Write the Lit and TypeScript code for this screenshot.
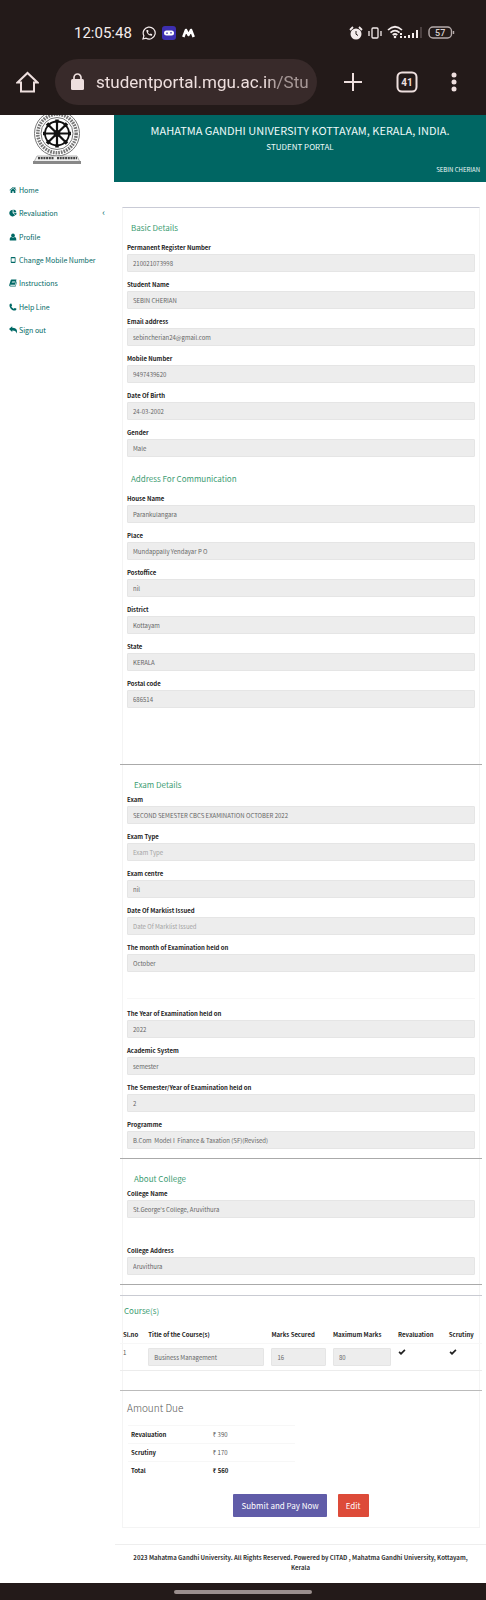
import { LitElement, html, css, svg, nothing } from "lit";
import { customElement, property } from "lit/decorators.js";

type Field = { label: string; value?: string; placeholder?: string };

const basic: Field[] = [
  { label: "Permanent Register Number", value: "210021073998" },
  { label: "Student Name", value: "SEBIN CHERIAN" },
  { label: "Email address", value: "sebincherian24@gmail.com" },
  { label: "Mobile Number", value: "9497439620" },
  { label: "Date Of Birth", value: "24-03-2002" },
  { label: "Gender", value: "Male" },
];
const address: Field[] = [
  { label: "House Name", value: "Parankulangara" },
  { label: "Place", value: "Mundappally Yendayar P O" },
  { label: "Postoffice", value: "nil" },
  { label: "District", value: "Kottayam" },
  { label: "State", value: "KERALA" },
  { label: "Postal code", value: "686514" },
];
const exam: Field[] = [
  { label: "Exam", value: "SECOND SEMESTER CBCS EXAMINATION OCTOBER 2022" },
  { label: "Exam Type", placeholder: "Exam Type" },
  { label: "Exam centre", value: "nil" },
  { label: "Date Of Marklist Issued", placeholder: "Date Of Marklist Issued" },
  { label: "The month of Examination held on", value: "October" },
];
const programme: Field[] = [
  { label: "The Year of Examination held on", value: "2022" },
  { label: "Academic System", value: "semester" },
  { label: "The Semester/Year of Examination held on", value: "2" },
  { label: "Programme", value: "B.Com  Model I  Finance & Taxation (SF)(Revised)" },
];
const college: Field[] = [
  { label: "College Name", value: "St.George's College, Aruvithura" },
  { label: "College Address", value: "Aruvithura" },
];

const glyphs = {
  home: svg`<path d="M1 8.2 8 2l2.6 2.3V2.6h2.2v3.7L15 8.2l-.9 1L8 3.9 1.900 9.200z"/><path d="M3.200 9.200 8 5l4.800 4.200V14H9.400v-3.600H6.600V14H3.200z"/>`,
  pie: svg`<path d="M7.300 1.500a6.700 6.700 0 1 0 5 11.200L7.300 8z"/><path d="M9 1v6l5.900-.6A6.500 6.500 0 0 0 9 1zM9.200 8.300l4.400 4A6.500 6.500 0 0 0 15 7.800z"/>`,
  user: svg`<circle cx="8" cy="4.800" r="3.700"/><path d="M1.500 15v-3c0-2.600 1.500-4 3.400-4a5 5 0 0 0 6.200 0c1.900 0 3.400 1.400 3.400 4v3z"/>`,
  mobile: svg`<path fill-rule="evenodd" d="M5 2h6.500A1.500 1.500 0 0 1 13 3.500v9a1.500 1.500 0 0 1-1.500 1.500H5a1.500 1.500 0 0 1-1.500-1.500v-9A1.500 1.500 0 0 1 5 2zM5 4.300v7.400h6.500V4.300z"/>`,
  book: svg`<path fill-rule="evenodd" d="M5 1h10l-2.800 10.500H2.600c-.7 1 0 1.800 1 1.800h9.200L15 4.500c.8.500.8 1 .6 1.800L13.400 15H3C1 15 0 13.300.6 11.600L3.400 2.400C3.700 1.500 4.200 1 5 1zm1.400 3-.3 1h6l.3-1zm-.7 2.500-.3 1h6l.3-1z"/>`,
  phone: svg`<path d="M1.200 3.200C2 1.600 3.300 1 4.600 1c.6 1 1.300 2.600 1.600 3.800-.3.800-1.500 1.200-1.500 2 .8 2 2.500 3.700 4.500 4.500.8 0 1.300-1.300 2-1.500 1.200.3 2.800 1 3.800 1.700 0 1.600-.8 2.700-2.200 3.300C7 16.300-.3 9 1.200 3.200z"/>`,
  reply: svg`<path d="M0 6 6.500.5v3.200c6.300 0 9.500 2.600 9.500 6.600 0 1.700-.8 3.400-1.800 4.700.8-4-1.600-6-7.700-6v3z"/>`,
  check: svg`<path d="M1 8.800 3.300 6.500 6 9.200 12.700 2.500 15 4.800 6 13.800z"/>`,
};

@customElement("ui-glyph")
class UiGlyph extends LitElement {
  static styles = css`
    :host { display: inline-flex; width: 8px; height: 8px; }
    .glyph { width: 100%; height: 100%; fill: currentColor; }
  `;
  @property() name: keyof typeof glyphs = "home";
  render() {
    return html`<svg class="glyph" viewBox="0 0 16 16" aria-hidden="true">${glyphs[this.name]}</svg>`;
  }
}

@customElement("phone-bars")
class PhoneBars extends LitElement {
  static styles = css`
    :host { display: block; background: #231a19; color: #eedfde; font-family: Roboto, sans-serif; }
    .status { display: flex; align-items: center; justify-content: space-between; padding: 20px 31px 0 74px; height: 25px; }
    .left, .right { display: flex; align-items: center; }
    .left { gap: 6px; }
    .right { gap: 5px; }
    .clock { font-size: 15px; line-height: 24px; margin-right: 4px; color: #f4ecec; }
    .bar { display: flex; align-items: center; padding: 14px 29px 10px 16px; height: 46px; }
    .tool { display: flex; padding: 0; border: 0; background: none; color: inherit; }
    .pill { display: flex; align-items: center; flex: 1; height: 46px; min-width: 0; margin: 0 26px 0 16px; padding: 0 9px 0 15px; border-radius: 23px; background: #382a2a; gap: 11px; }
    .lock { flex: none; }
    .url { flex: 1; min-width: 0; padding: 0; border: 0; outline: 0; background: none; color: inherit; font: 17px/24px Roboto, sans-serif; -webkit-mask-image: linear-gradient(to right, #000 80%, #0009 85%); mask-image: linear-gradient(to right, #000 80%, #0009 85%); }
    .tools { display: flex; align-items: center; gap: 33px; }
    .num { font: 700 10px Roboto, sans-serif; }
    .bat { font: 500 9px Roboto, sans-serif; }
  `;
  render() {
    return html`
      <div class="status">
        <div class="left">
          <span class="clock">12:05:48</span>
          <svg width="14" height="14" viewBox="0 0 14 14" fill="none" stroke="#f4ecec" stroke-width="1.200"><path d="M1 13l.9-3.100A6 6 0 1 1 4.100 12.200z"/><path d="M4.400 4c-.4 3 2.600 6 5.600 5.700l.2-1.500-1.500-.8-.9.800C6.900 7.800 6.200 7.100 5.900 6.200l.7-.9L6 3.900z" fill="#f4ecec" stroke="none"/></svg>
          <svg width="14" height="14" viewBox="0 0 14 14"><rect width="14" height="14" rx="3" fill="#3d2fb0"/><rect x="2" y="4.500" width="10" height="5" rx="2.500" fill="#fff"/><path d="M4 7.500q1-1.500 2 0M8 6.500q1 1.500 2 0" fill="none" stroke="#3d2fb0"/></svg>
          <svg width="13" height="10" viewBox="0 0 13 10" fill="none" stroke="#fff" stroke-width="2.600" stroke-linejoin="round"><path d="M1.300 9 4 2l2.500 5L9 2l2.700 7"/></svg>
        </div>
        <div class="right">
          <svg width="14" height="14" viewBox="0 0 14 14"><circle cx="7" cy="8" r="5.500" fill="#f4ecec"/><path d="M1 4l3-3M13 4l-3-3" stroke="#f4ecec" stroke-width="1.800"/><path d="M7 5v3.200l2 1.300" fill="none" stroke="#231a19"/></svg>
          <svg width="14" height="14" viewBox="0 0 14 14" fill="none" stroke="#f4ecec" stroke-width="1.300"><rect x="4" y="2" width="6" height="10" rx="1"/><path d="M1 5v5M13 5v5"/></svg>
          <svg width="36" height="15" viewBox="0 0 36 15" fill="none" stroke="#f4ecec" stroke-width="1.700"><path d="M1 5Q8-1.500 15 5M3.500 7.600Q8 3.500 12.500 7.600M5.700 10Q8 8 10.300 10"/><circle cx="8" cy="12" r="1.300" fill="#f4ecec" stroke="none"/><path d="M14 8v2M14 11v2M18 13v-2M22 13v-3M26 13V8M30 13V5" stroke-width="2"/><path d="M34 13V2" stroke="#4b4040" stroke-width="2"/></svg>
          <svg width="27" height="13" viewBox="0 0 27 13" role="img" aria-label="Battery 57"><rect x="1" y="1" width="22.500" height="11" rx="4" fill="none" stroke="#b5abaa" stroke-width="1.400"/><path d="M25.500 5v3" stroke="#b5abaa" stroke-width="1.400"/><text class="bat" x="12.200" y="9.700" text-anchor="middle" fill="#d8cfce">57</text></svg>
        </div>
      </div>
      <div class="bar">
        <button class="tool" aria-label="Home page"><svg width="23" height="22" viewBox="0 0 23 22" fill="none" stroke="currentColor" stroke-width="2"><path d="M1.500 11.500 11.500 2l10 9.500H18V20.500H5V11.500z"/></svg></button>
        <div class="pill">
          <svg class="lock" width="15" height="18" viewBox="0 0 15 18"><rect x="1" y="6" width="13" height="11" rx="1.500" fill="currentColor"/><path d="M4 7V4.500a3.500 3.500 0 0 1 7 0V7" fill="none" stroke="currentColor" stroke-width="1.700"/></svg>
          <input class="url" aria-label="Address" .value=${"studentportal.mgu.ac.in/StudentPortal"} />
        </div>
        <div class="tools">
          <button class="tool" aria-label="New tab"><svg width="20" height="20" viewBox="0 0 20 20" stroke="currentColor" stroke-width="2"><path d="M10 1v18M1 10h18"/></svg></button>
          <button class="tool" aria-label="Tabs"><svg width="22" height="22" viewBox="0 0 22 22"><rect x="1.500" y="1.500" width="19" height="19" rx="4.500" fill="none" stroke="currentColor" stroke-width="2"/><text class="num" x="11" y="14.600" text-anchor="middle" fill="currentColor">41</text></svg></button>
          <button class="tool" aria-label="Menu"><svg width="6" height="20" viewBox="0 0 6 20" fill="currentColor"><circle cx="3" cy="3" r="2.500"/><circle cx="3" cy="10" r="2.500"/><circle cx="3" cy="17" r="2.500"/></svg></button>
        </div>
      </div>`;
  }
}

@customElement("portal-sidebar")
class PortalSidebar extends LitElement {
  static styles = css`
    :host { display: block; color: #006966; }
    .crest { display: block; width: 50px; height: 50px; margin: 0 auto; color: #111; }
    .menu { display: grid; grid-auto-rows: 1fr; height: 164px; margin: 13px 0 0; padding: 0 9px; list-style: none; }
    .item { display: flex; }
    .link { display: flex; align-items: center; flex: 1; gap: 2px; color: inherit; text-decoration: none; font-size: 7px; line-height: 10px; white-space: nowrap; }
    .caret { margin-left: auto; font-size: 9px; }
  `;
  render() {
    const items: [keyof typeof glyphs, string][] = [
      ["home", "Home"], ["pie", "Revaluation"], ["user", "Profile"], ["mobile", "Change Mobile Number"],
      ["book", "Instructions"], ["phone", "Help Line"], ["reply", "Sign out"],
    ];
    return html`
      <svg class="crest" viewBox="0 0 50 50" role="img" aria-label="University crest">
        <g fill="none" stroke="currentColor">
          <circle cx="25" cy="18.500" r="22.500" stroke="#777" stroke-width="1"/>
          <circle cx="25" cy="18.500" r="19.200" stroke="#777" stroke-width="3.500" stroke-dasharray="1.700 1"/>
          <circle cx="25" cy="18.500" r="16" stroke="#777" stroke-width="1"/>
          <circle cx="25" cy="18.500" r="12" stroke-width="1.800"/>
          <path d="M25 6v25M12.500 18.500h25M16.200 9.700l17.600 17.600M33.800 9.700 16.200 27.300" stroke-width="2.200"/>
          <path d="M25 4.500v3M25 29.500v3M11 18.500h3M36 18.500h3M15 8.500l2.500 2.500M32.500 26l2.500 2.500M35 8.500 32.500 11M17.500 26 15 28.500" stroke-width="3.500"/>
        </g>
        <circle cx="25" cy="18.500" r="3.400" fill="currentColor"/>
        <path d="M5 41h40l3 6H2z" fill="#eee" stroke="#888" stroke-width=".6"/>
        <path d="M6 43.200h16M25 43.200h20" stroke="#444" stroke-width="2.200" stroke-dasharray="2 .7"/>
        <path d="M1 47.500h48" stroke="#888" stroke-width="3"/>
      </svg>
      <ul class="menu">
        ${items.map(([icon, text]) => html`<li class="item"><a class="link" href="#"><ui-glyph name=${icon}></ui-glyph><span>${text}</span>${text === "Revaluation" ? html`<span class="caret">‹</span>` : nothing}</a></li>`)}
      </ul>`;
  }
}

@customElement("portal-form")
class PortalForm extends LitElement {
  static styles = css`
    :host { display: block; color: #222; font-size: 6px; }
    .panel { margin: 25px 6px 0 8px; border: 1px solid #f4f4f4; border-top: 1px solid #c9cbd6; padding: 0 4px 10px; }
    .title { margin: 0; font-weight: 400; font-size: 8px; line-height: 12px; color: #3c9c72; }
    .section > .title { padding: 14px 0 8px 4px; }
    .section.address > .title { padding: 9px 0 8px 4px; }
    .section.tight > .title { padding: 14px 0 3px 7px; }
    .section.address { padding-bottom: 49px; }
    .section.later { margin-top: 19px; border-top: 1px solid #f7f7f7; padding-top: 9px; }
    .field { padding-bottom: 7px; }
    .label { display: block; font-weight: 700; font-size: 6px; line-height: 10px; padding: 1px 0; }
    .box { display: block; box-sizing: border-box; width: 100%; height: 18px; margin: 0; padding: 0 5px; border: 1px solid #e5e5e5; border-radius: 1px; background: #ededed; color: #666; font-family: inherit; font-size: 6px; line-height: 16px; outline: 0; }
    .box::placeholder { color: #a3a3a3; opacity: 1; }
    .rule { border: 0; border-top: 1px solid #aaa; margin: 0 -7px; }
    .rule.gap { margin-top: 2px; }
    .rule.pale { border-top: 1px solid #c9cbd2; margin-top: 10px; }
    .rule.amount { border-top-color: #bbb; margin-top: 19px; }
    .college .field:last-child { padding-top: 20px; }
    .courses { margin: 0 -7px; }
    .courses .title { padding: 9px 0 9px 4px; }
    .grid { width: 100%; border-collapse: collapse; table-layout: fixed; border-bottom: 1px solid #ececec; }
    .grid th { box-sizing: border-box; padding: 0 3px; text-align: left; font-weight: 700; line-height: 17px; white-space: nowrap; }
    .grid td { padding: 4px 4px 4px 3px; vertical-align: top; border-top: 1px solid #f7f7f7; line-height: 10px; color: #555; }
    .grid ui-glyph { color: #222; }
    .c1 { width: 7%; } .c2 { width: 34%; } .c3 { width: 17%; } .c4 { width: 18%; } .c5 { width: 14%; }
    .due { margin: 0; padding: 8px 0; font-size: 10px; line-height: 18px; font-weight: 300; color: #555; }
    .fees { width: 48%; margin-left: 1px; border-collapse: collapse; }
    .fees th, .fees td { box-sizing: border-box; padding: 0 3px; border-top: 1px solid #f7f7f7; line-height: 17px; text-align: left; }
    .fees th { width: 49%; }
    .fees td { color: #555; }
    .fees .sum { font-weight: 700; color: #222; }
    .actions { display: flex; justify-content: center; gap: 11px; margin-top: 15px; }
    .btn { height: 23px; border: 0; border-radius: 1px; padding: 0 8px; color: #fff; font-family: inherit; font-size: 8px; line-height: 23px; }
    .pay { background: #605ca8; }
    .edit { background: #dd4b39; }
  `;
  private field(f: Field) {
    const id = f.label.toLowerCase().replace(/[^a-z]+/g, "-");
    return html`<div class="field"><label class="label" for=${id}>${f.label}</label><input class="box" id=${id} readonly .value=${f.value ?? ""} placeholder=${f.placeholder ?? nothing} /></div>`;
  }
  private cell(label: string, value: string) {
    return html`<td><input class="box" aria-label=${label} readonly .value=${value} /></td>`;
  }
  render() {
    return html`
      <div class="panel">
        <section class="section"><h2 class="title">Basic Details</h2>${basic.map(this.field)}</section>
        <section class="section address"><h2 class="title">Address For Communication</h2>${address.map(this.field)}</section>
        <hr class="rule" />
        <section class="section tight"><h2 class="title">Exam Details</h2>${exam.map(this.field)}</section>
        <section class="section later">${programme.map(this.field)}</section>
        <hr class="rule gap" />
        <section class="section tight college"><h2 class="title">About College</h2>${college.map(this.field)}</section>
        <hr class="rule gap" />
        <hr class="rule pale" />
        <section class="courses">
          <h2 class="title">Course(s)</h2>
          <table class="grid">
            <thead><tr><th class="c1">Sl.no</th><th class="c2">Title of the Course(s)</th><th class="c3">Marks Secured</th><th class="c4">Maximum Marks</th><th class="c5">Revaluation</th><th>Scrutiny</th></tr></thead>
            <tbody><tr><td>1</td>${this.cell("Title of the Course(s)", "Business Management")}${this.cell("Marks Secured", "16")}${this.cell("Maximum Marks", "80")}
              <td><ui-glyph name="check"></ui-glyph></td><td><ui-glyph name="check"></ui-glyph></td></tr></tbody>
          </table>
        </section>
        <hr class="rule amount" />
        <h2 class="due">Amount Due</h2>
        <table class="fees">
          <tr><th>Revaluation</th><td>₹ 390</td></tr>
          <tr><th>Scrutiny</th><td>₹ 170</td></tr>
          <tr><th>Total</th><td class="sum">₹ 560</td></tr>
        </table>
        <div class="actions"><button class="btn pay">Submit and Pay Now</button><button class="btn edit">Edit</button></div>
      </div>`;
  }
}

@customElement("app-root")
class AppRoot extends LitElement {
  static styles = css`
    :host { display: block; background: #fff; font-family: "Noto Sans CJK SC", "Noto Sans", sans-serif; }
    .layout { display: grid; grid-template-columns: 114px minmax(0, 1fr); }
    .banner { background: #006663; color: #eefafa; text-align: center; padding: 6px 6px 6px; }
    .name { margin: 0; font-weight: 400; font-size: 11px; line-height: 18px; }
    .sub { margin: 0; font-size: 8px; line-height: 16px; }
    .who { margin: 0; padding-top: 9px; font-size: 6px; line-height: 12px; text-align: right; }
    .foot { margin: 16px 0 0 1px; border-top: 1px solid #eee; padding: 8px 10px 10px; text-align: center; font-size: 6px; line-height: 10px; font-weight: 700; color: #333; }
    .nav { display: flex; justify-content: center; background: #231a19; padding: 7px 0; }
    .handle { width: 138px; height: 4px; border-radius: 2px; background: #9a8e8d; }
  `;
  render() {
    return html`
      <phone-bars></phone-bars>
      <div class="layout">
        <portal-sidebar></portal-sidebar>
        <main>
          <header class="banner">
            <h1 class="name">MAHATMA GANDHI UNIVERSITY KOTTAYAM, KERALA, INDIA.</h1>
            <p class="sub">STUDENT PORTAL</p>
            <p class="who">SEBIN CHERIAN</p>
          </header>
          <portal-form></portal-form>
          <footer class="foot">2023 Mahatma Gandhi University. All Rights Reserved. Powered by CITAD , Mahatma Gandhi University, Kottayam, Kerala</footer>
        </main>
      </div>
      <div class="nav"><div class="handle"></div></div>`;
  }
}
